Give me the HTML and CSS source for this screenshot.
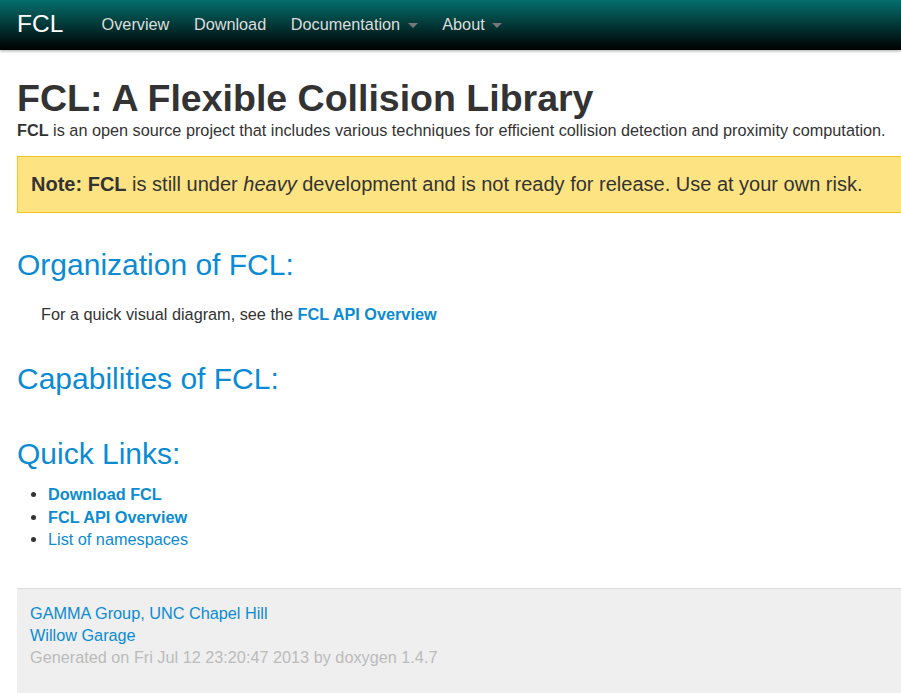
FILE: index.html
```html
<!DOCTYPE html>
<html lang="en">

<head>
  <meta charset="UTF-8" />
  <title>FCL: A Flexible Collision Library</title>
  <link rel="stylesheet" href="styles.css">
</head>

<body>
  <div class="navbar">
    <a class="brand" href="#">FCL</a>
    <ul class="nav">
      <li><a href="#">Overview</a></li>
      <li><a href="#">Download</a></li>
      <li><a href="#">Documentation <span class="caret"></span></a></li>
      <li><a href="#">About <span class="caret"></span></a></li>
    </ul>
  </div>

  <div class="container">
    <h1>FCL: A Flexible Collision Library</h1>
    <p class="lead"><b>FCL</b> is an open source project that includes various techniques for efficient collision detection and proximity computation.</p>

    <div class="alert"><b>Note: FCL</b> is still under <i>heavy</i> development and is not ready for release. Use at your own risk.</div>

    <h2>Organization of FCL:</h2>
    <p class="indent">For a quick visual diagram, see the <a class="strong" href="#">FCL API Overview</a></p>

    <h2>Capabilities of FCL:</h2>

    <h2>Quick Links:</h2>
    <ul class="links">
      <li><a class="strong" href="#">Download FCL</a></li>
      <li><a class="strong" href="#">FCL API Overview</a></li>
      <li><a href="#">List of namespaces</a></li>
    </ul>

    <div class="footer">
      <a href="#">GAMMA Group, UNC Chapel Hill</a><br>
      <a href="#">Willow Garage</a><br>
      <span class="generated">Generated on Fri Jul 12 23:20:47 2013 by doxygen 1.4.7</span>
    </div>
  </div>
</body>

</html>
```

FILE: styles.css
```css
html,
body {
  overflow-x: hidden;
}

body {
  margin: 0;
  font-family: "Liberation Sans", Arial, sans-serif;
  font-size: 16.25px;
  line-height: 22px;
  color: #333;
  background: #fff;
}

a {
  color: #0a8bd3;
  text-decoration: none;
}

a.strong {
  font-weight: bold;
}

/* Top bar */
.navbar {
  display: flex;
  align-items: flex-start;
  height: 50px;
  padding-left: 17px;
  background: linear-gradient(to bottom, #046f6d, #000);
  box-shadow: 0 1px 3px rgba(0, 0, 0, 0.35);
}

.brand {
  color: #fff;
  font-size: 24.5px;
  line-height: 47px;
  margin-right: 26px;
}

.nav {
  display: flex;
  margin: 0;
  padding: 0;
  list-style: none;
}

.nav a {
  display: block;
  padding: 0 12.3px;
  color: #ddd;
  line-height: 48px;
}

.caret {
  display: inline-block;
  width: 0;
  height: 0;
  margin-left: 3px;
  vertical-align: middle;
  border-top: 5px solid #777;
  border-left: 5px solid transparent;
  border-right: 5px solid transparent;
}

/* Content */
.container {
  width: 1000px;
  padding-left: 17px;
}

h1 {
  margin: 28px 0 0;
  font-size: 37.5px;
  line-height: 40px;
  color: #333;
}

.lead {
  margin: 0;
  font-size: 16.25px;
  line-height: 25px;
}

.alert {
  margin: 13px 0 0;
  padding: 14px 13px;
  font-size: 20px;
  line-height: 27px;
  background: #fee382;
  border: 1px solid #f4c51f;
}

h2 {
  margin: 29px 0 0;
  font-size: 30px;
  font-weight: normal;
  line-height: 46px;
  color: #0a8bd3;
}

.indent {
  margin: 15px 0 31px;
  padding-left: 24px;
}

.links {
  margin: 6px 0 0;
  padding-left: 31px;
  line-height: 22.5px;
}

.footer {
  margin-top: 37px;
  padding: 13px 13px 40px;
  background: #efefef;
  border-top: 1px solid #ddd;
}

.generated {
  color: #bbb;
}
```
